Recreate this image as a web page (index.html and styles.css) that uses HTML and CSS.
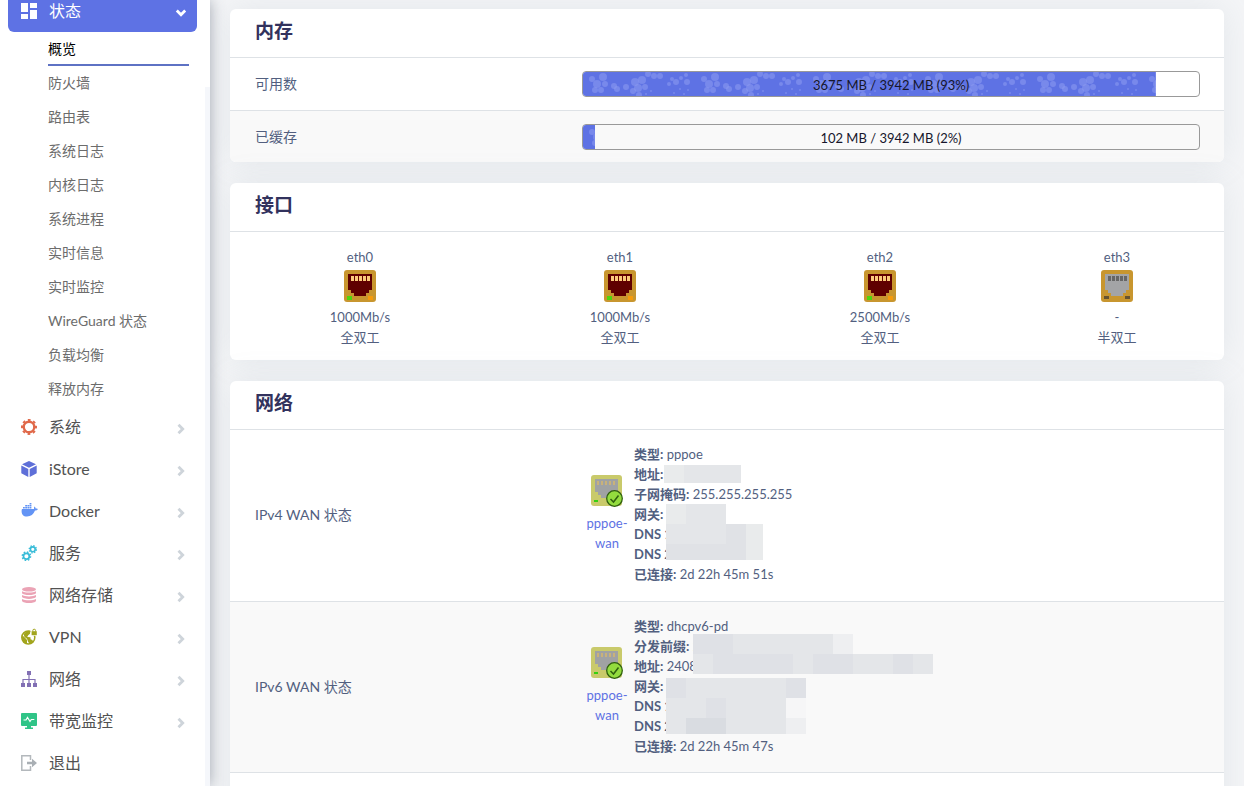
FILE: index.html
```html
<!DOCTYPE html>
<html lang="zh-CN">
<head>
<meta charset="utf-8">
<title>概览</title>
<link rel="stylesheet" href="styles.css">
</head>
<body>
<svg class="defs" aria-hidden="true">
  <defs>
    <filter id="soft"><feGaussianBlur stdDeviation="0.7"/></filter>
    <pattern id="bubbles" width="112" height="26" patternUnits="userSpaceOnUse">
      <rect width="112" height="26" fill="#5e72e4"/>
      <g fill="#8c9af0" fill-opacity=".55" filter="url(#soft)">
        <circle cx="9" cy="7" r="3"/><circle cx="20" cy="5" r="4"/><circle cx="14" cy="12" r="4"/><circle cx="22" cy="12" r="3"/><circle cx="12" cy="18" r="3"/><circle cx="18" cy="18" r="3"/><circle cx="31" cy="14" r="3"/><circle cx="34" cy="17" r="3"/><circle cx="43" cy="15" r="3"/>
        <circle cx="52" cy="10" r="4"/><circle cx="59" cy="8" r="4"/><circle cx="55" cy="16" r="4"/><circle cx="62" cy="15" r="3"/><circle cx="50" cy="19" r="3"/><circle cx="56" cy="23" r="3"/><circle cx="65" cy="2" r="3"/><circle cx="71" cy="4" r="3"/><circle cx="77" cy="4" r="3"/><circle cx="63" cy="22" r="1"/><circle cx="68" cy="19" r="1"/>
        <circle cx="86" cy="12" r="2"/><circle cx="89" cy="7" r="2"/><circle cx="93" cy="10" r="3"/><circle cx="98" cy="6" r="2"/><circle cx="104" cy="10" r="3"/><circle cx="103" cy="3" r="2"/><circle cx="97" cy="17" r="1"/><circle cx="105" cy="18" r="1"/><circle cx="91" cy="21" r="1"/><circle cx="101" cy="22" r="1"/>
      </g>
    </pattern>
    <symbol id="chev" viewBox="0 0 10 10"><path d="M2.500.8 6.700 5 2.500 9.200" fill="none" stroke="currentColor" stroke-width="2.800"/></symbol>
    <symbol id="port" viewBox="0 0 32 32">
      <path d="M4 4H28V20H25V23H22V26H10V23H7V20H4Z"/>
    </symbol>
    <symbol id="port-up" viewBox="0 0 32 32">
      <rect width="32" height="32" rx="3" fill="#c8962f"/>
      <use href="#port" fill="#5f0000"/>
      <path d="M7 6h3v5h-3zM11 6h3v5h-3zM15 6h3v5h-3zM19 6h3v5h-3zM23 6h3v5h-3z" fill="#fbcb7c"/>
      <path d="M3 26h5v4H3z" fill="#4fd60c"/><path d="M24 26h5v4h-5z" fill="#f59a0c"/>
    </symbol>
    <symbol id="port-down" viewBox="0 0 32 32">
      <rect width="32" height="32" rx="3" fill="#c8962f"/>
      <use href="#port" fill="#a3a4a6"/>
      <path d="M7 6h3v5h-3zM11 6h3v5h-3zM15 6h3v5h-3zM19 6h3v5h-3zM23 6h3v5h-3z" fill="#666"/>
      <path d="M3 26h5v3H3zM24 26h5v3h-5z" fill="#665330"/>
    </symbol>
    <symbol id="tunnel" viewBox="0 0 32 32">
      <rect width="31" height="31" rx="3" fill="#c9ca6b"/>
      <path d="M4 4H27V20H24V23H10V20H7V17H4Z" fill="#a0a2a3"/>
      <path d="M6 6h2v4h-2zM10 6h2v4h-2zM14 6h2v4h-2zM18 6h2v4h-2zM22 6h2v4h-2z" fill="#c9b27a"/>
      <path d="M3 25h4v2H3z" fill="#35d010"/>
      <circle cx="23.500" cy="23.500" r="7.800" fill="#93dc3e" stroke="#30600f" stroke-width="1.300"/>
      <path d="m19.500 24 3 3 5-6.500" fill="none" stroke="#30600f" stroke-width="1.500"/>
    </symbol>
  </defs>
</svg>
<div class="layout">
  <aside class="sidebar">
    <nav class="menu">
      <a class="item open" href="#">
        <svg class="icon" viewBox="0 0 16 16" fill="#fff"><path d="M0 0h7v9H0zM9 0h7v5H9zM0 11h7v5H0zM9 7h7v9H9z"/></svg>
        <span>状态</span><svg class="chev down"><use href="#chev"/></svg>
      </a>
      <ul class="submenu">
        <li><a class="current" href="#">概览</a></li>
        <li><a href="#">防火墙</a></li>
        <li><a href="#">路由表</a></li>
        <li><a href="#">系统日志</a></li>
        <li><a href="#">内核日志</a></li>
        <li><a href="#">系统进程</a></li>
        <li><a href="#">实时信息</a></li>
        <li><a href="#">实时监控</a></li>
        <li><a href="#">WireGuard 状态</a></li>
        <li><a href="#">负载均衡</a></li>
        <li><a href="#">释放内存</a></li>
      </ul>
      <a class="item" href="#">
        <svg class="icon" viewBox="0 0 16 16" fill="none" stroke="#e0694a"><circle cx="8" cy="8" r="5.300" stroke-width="2.400"/><circle cx="8" cy="8" r="7" stroke-width="2" stroke-dasharray="2.750 2.748" stroke-dashoffset="1.375"/></svg>
        <span>系统</span><svg class="chev"><use href="#chev"/></svg>
      </a>
      <a class="item" href="#">
        <svg class="icon" viewBox="0 0 16 16" fill="#5e6fd8"><path d="M8 0 15 3.300 8 6.800 1 3.300ZM.3 4.500 7.300 8v8L.3 12.300ZM15.700 4.500 8.700 8v8l7-3.700Z"/></svg>
        <span>iStore</span><svg class="chev"><use href="#chev"/></svg>
      </a>
      <a class="item" href="#">
        <svg class="icon" viewBox="0 0 16 16" fill="#6394f5"><path d="M1 6h12c.1-1.300 0-2 .5-2.600.8.600 1.100 1.400 1.100 2.200.8 0 1.600.1 2.300.5-.5 1.100-1.600 1.500-2.900 1.500C12.600 11.400 9.800 13.500 6 13.500 2.200 13.500.6 11.500.6 8 .6 7.200.7 6.500 1 6Z"/><path d="M2 4h1.800v1.600H2zM4.200 4H6v1.600H4.200zM6.400 4h1.800v1.600H6.400zM8.600 4h1.800v1.600H8.600zM4.200 2H6v1.600H4.200zM6.400 2h1.800v1.600H6.400zM8.600 2h1.800v1.600H8.600zM8.600 0h1.800v1.600H8.600z"/></svg>
        <span>Docker</span><svg class="chev"><use href="#chev"/></svg>
      </a>
      <a class="item" href="#">
        <svg class="icon" viewBox="0 0 16 16" fill="none" stroke="#38bcd8"><circle cx="5.400" cy="11.200" r="2.900" stroke-width="1.700"/><circle cx="5.400" cy="11.200" r="4.200" stroke-width="1.400" stroke-dasharray="1.650 1.648"/><circle cx="11.800" cy="4.300" r="2.400" stroke-width="1.600"/><circle cx="11.800" cy="4.300" r="3.600" stroke-width="1.300" stroke-dasharray="1.410 1.417"/></svg>
        <span>服务</span><svg class="chev"><use href="#chev"/></svg>
      </a>
      <a class="item" href="#">
        <svg class="icon" viewBox="0 0 16 16" fill="#eba3b5"><ellipse cx="8" cy="2.300" rx="7" ry="2.300"/><path d="M1 4.200c2.500 1.800 11.500 1.800 14 0v2c-1.500 2.400-12.500 2.400-14 0ZM1 8.100c2.500 1.800 11.500 1.800 14 0v2c-1.500 2.400-12.500 2.400-14 0ZM1 12c2.500 1.800 11.500 1.800 14 0v1.900c-1.500 2.700-12.500 2.700-14 0Z"/></svg>
        <span>网络存储</span><svg class="chev"><use href="#chev"/></svg>
      </a>
      <a class="item" href="#">
        <svg class="icon" viewBox="0 0 16 16"><circle cx="7.300" cy="8.500" r="6.500" fill="#fff" stroke="#a2a51d" stroke-width="1.500"/><path d="M1.300 6.200 4.500 9.300 6 11v4C2.500 14.500.3 11.500 1.300 6.200ZM5.600 2.300 9 1.800v3L7.200 6.200 6.200 8 9.500 8.200v2l1.800.8 1.200 1.800C9.500 16 7.500 14 7 12.500L6 9.800 3.500 8 2.600 5Z" fill="#a2a51d"/><path d="M9.500-.5H17v7.300H9.500z" fill="#fff"/><path d="M10.600 2.200h5.200v4h-5.200z" fill="#a2a51d"/><path d="M11.800 2.500V1.600a1.400 1.400 0 0 1 2.800 0v.9" fill="none" stroke="#a2a51d"/></svg>
        <span>VPN</span><svg class="chev"><use href="#chev"/></svg>
      </a>
      <a class="item" href="#">
        <svg class="icon" viewBox="0 0 16 16" fill="#8270b4"><path d="M6 0h4v4H6zM0 12h4v4H0zM6 12h4v4H6zM12 12h4v4h-4z"/><path d="M2 12V8.500h12V12M8 4v8" fill="none" stroke="#8270b4" stroke-width="1.200"/></svg>
        <span>网络</span><svg class="chev"><use href="#chev"/></svg>
      </a>
      <a class="item" href="#">
        <svg class="icon" viewBox="0 0 16 16"><path d="M1 0h14q1 0 1 1v11q0 1-1 1h-5v1.500h2V16H4v-1.500h2V13H1q-1 0-1-1V1Q0 0 1 0Z" fill="#2fc487"/><path d="M2.500 7H5l1.500-2.500 2.500 4L10.300 6.500h3" fill="none" stroke="#fff" stroke-width="1.200"/></svg>
        <span>带宽监控</span><svg class="chev"><use href="#chev"/></svg>
      </a>
      <a class="item" href="#">
        <svg class="icon" viewBox="0 0 16 16"><path d="M9.500 5V.8H.8v14.400h8.700V11" fill="none" stroke="#b3b8bc" stroke-width="1.500"/><path d="M6 6.700h5V3.800L16 8l-5 4.200V9.300H6Z" fill="#a9afb4"/></svg>
        <span>退出</span>
      </a>
    </nav>
    <div class="track"></div>
  </aside>
  <main class="main">
    <section class="card">
      <h2>内存</h2>
      <table class="grid memory">
        <tr><th scope="row">可用数</th><td><div class="bar" role="progressbar" aria-label="可用数" aria-valuenow="93"><svg class="fill" style="width:93%"><rect width="100%" height="100%" fill="url(#bubbles)"/></svg><span>3675 MB / 3942 MB (93%)</span></div></td></tr>
        <tr><th scope="row">已缓存</th><td><div class="bar" role="progressbar" aria-label="已缓存" aria-valuenow="2"><svg class="fill" style="width:2%"><rect width="100%" height="100%" fill="url(#bubbles)"/></svg><span>102 MB / 3942 MB (2%)</span></div></td></tr>
      </table>
    </section>
    <section class="card">
      <h2>接口</h2>
      <div class="ports">
        <div class="port"><span>eth0</span><svg class="jack"><use href="#port-up"/></svg><span>1000Mb/s</span><span>全双工</span></div>
        <div class="port"><span>eth1</span><svg class="jack"><use href="#port-up"/></svg><span>1000Mb/s</span><span>全双工</span></div>
        <div class="port"><span>eth2</span><svg class="jack"><use href="#port-up"/></svg><span>2500Mb/s</span><span>全双工</span></div>
        <div class="port last"><span>eth3</span><svg class="jack"><use href="#port-down"/></svg><span>-</span><span>半双工</span></div>
      </div>
    </section>
    <section class="card">
      <h2>网络</h2>
      <table class="grid network">
        <tr><th scope="row">IPv4 WAN 状态</th><td><div class="wan">
          <div class="badge"><svg class="jack"><use href="#tunnel"/></svg><a href="#">pppoe-<br>wan</a></div>
          <div class="details">
            <div><b>类型:</b> pppoe</div><div><b>地址:</b></div><div><b>子网掩码:</b> 255.255.255.255</div><div><b>网关:</b></div><div><b>DNS 1:</b></div><div><b>DNS 2:</b></div><div><b>已连接:</b> 2d 22h 45m 51s</div>
            <svg class="mask" width="300" height="140">
              <path fill="#e9ebec" d="M30 21h20v18H30zM32 60h20v20H32zM112 80h17v20h-17zM112 100h17v16h-17z"/>
              <path fill="#e4e6e9" d="M50 21h57v18H50zM52 60h40v20H52zM32 80h80v20H32z"/>
              <path fill="#e0e2e6" d="M32 100h80v16H32zM92 80h20v20H92z"/>
            </svg>
          </div></div></td></tr>
        <tr><th scope="row">IPv6 WAN 状态</th><td><div class="wan">
          <div class="badge"><svg class="jack"><use href="#tunnel"/></svg><a href="#">pppoe-<br>wan</a></div>
          <div class="details">
            <div><b>类型:</b> dhcpv6-pd</div><div><b>分发前缀:</b> 2</div><div><b>地址:</b> 2408</div><div><b>网关:</b></div><div><b>DNS 1:</b></div><div><b>DNS 2:</b></div><div><b>已连接:</b> 2d 22h 45m 47s</div>
            <svg class="mask" width="300" height="140">
              <path fill="#e4e6e9" d="M59 18h140v20H59zM59 38h240v20H59zM32 62h140v20H32zM32 82h120v20H32zM32 102h120v16H32z"/>
              <path fill="#dfe1e6" d="M59 18h40v20H59zM79 38h80v20H79zM179 38h40v20h-40zM259 38h20v20h-20zM32 62h20v20H32zM72 82h20v20H72zM152 62h20v20h-20z"/>
              <path fill="#d9dce1" d="M52 102h40v16H52z"/>
              <path fill="#eeeff1" d="M199 18h20v20h-20zM152 102h20v16h-20z"/>
              <path fill="#f6f6f7" d="M152 82h20v20h-20z"/>
            </svg>
          </div></div></td></tr>
        <tr><th scope="row"></th><td></td></tr>
      </table>
    </section>
  </main>
</div>
</body>
</html>
```
FILE: styles.css
```css
* { box-sizing: border-box; }
body {
  margin: 0;
  background: #f4f5f7;
  color: #525f7f;
  font: 13px/20px Lato, "Noto Sans CJK SC", sans-serif;
}
a { color: #5e72e4; text-decoration: none; }
.defs { position: absolute; width: 0; height: 0; }
.layout { display: flex; height: 100vh; overflow: hidden; }

.sidebar {
  position: relative;
  z-index: 1;
  flex: none;
  display: flex;
  width: 210px;
  background: #fff;
  box-shadow: 0 0 14px rgba(60, 70, 90, .45);
  clip-path: inset(0 -40px 0 0);
}
.menu { flex: 1; margin-top: -10px; padding: 0 13px 0 8px; }
.track { width: 5px; margin-top: 87px; margin-left: -5px; background: #f5f7fb; }
.item {
  display: flex;
  align-items: center;
  height: 42px;
  padding: 0 11px 0 13px;
  color: #525252;
  font-size: 16px;
}
.item span { flex: 1; margin-left: 12px; }
.item.open { border-radius: 6px; background: #5e72e4; color: #fff; }
.icon { width: 16px; height: 16px; overflow: visible; }
.chev { width: 10px; height: 12px; margin-top: 3px; color: #ced4da; }
.chev.down { color: #fff; transform: rotate(90deg); }
.submenu { margin: 0; padding: 0 8px 0 40px; list-style: none; }
.submenu a {
  display: block;
  height: 34px;
  border-bottom: 2px solid transparent;
  color: #6c6c6c;
  font-size: 14px;
  line-height: 34px;
}
.submenu a.current { color: #000; border-color: #5e72c4; }

.main {
  flex: 1;
  display: flex;
  flex-direction: column;
  gap: 21px;
  min-width: 0;
  padding: 9px 20px 0;
}
.card {
  flex: none;
  overflow: hidden;
  border-radius: 6px;
  background: #fff;
  box-shadow: 0 0 32px rgba(136, 152, 170, .15);
}
h2 {
  margin: 0;
  padding: 0 25px 4px;
  border-bottom: 1px solid #dee2e6;
  color: #32325d;
  font-size: 19px;
  line-height: 44px;
}
.grid { width: 100%; border-collapse: collapse; table-layout: fixed; }
.grid tr + tr { border-top: 1px solid #dee2e6; }
.grid tr:nth-child(even) { background: #f9f9f9; }
.grid th { width: 33%; padding: 0 25px; font-size: 14px; font-weight: 400; text-align: left; }
.grid td { padding: 13px 24px; }
.memory tr:last-child td { padding-bottom: 12px; }
.bar {
  position: relative;
  height: 26px;
  overflow: hidden;
  border: 1px solid #999;
  border-radius: 4px;
  color: #16162c;
  line-height: 26px;
  text-align: center;
}
.fill { position: absolute; left: 0; top: 0; height: 100%; }
.bar span { position: relative; }

.ports { display: flex; padding: 15px 0 13px; }
.port { flex: 260; display: flex; flex-direction: column; align-items: center; }
.port.last { flex: 214; }
.jack { display: block; width: 32px; height: 32px; overflow: visible; }
.port .jack { margin: 3px 0 5px; }

.network td { height: 171px; padding: 14px 24px 16px; }
.wan { display: flex; align-items: center; gap: 2px; }
.badge { display: flex; flex-direction: column; align-items: center; gap: 6px; width: 50px; text-align: center; }
.details { position: relative; flex: 1; white-space: nowrap; }
.mask { position: absolute; left: 0; top: 0; }
```
